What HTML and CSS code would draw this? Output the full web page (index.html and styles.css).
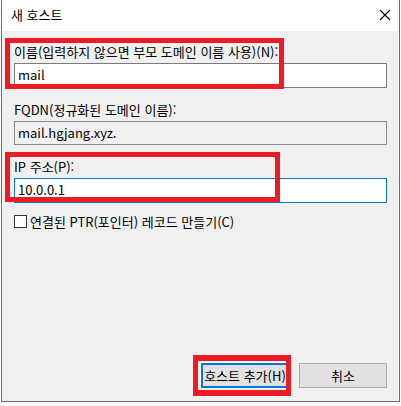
FILE: index.html
```html
<!DOCTYPE html>
<html lang="ko">
<head>
<meta charset="utf-8">
<title>새 호스트</title>
<link rel="stylesheet" href="styles.css">
</head>
<body>
<div class="dialog">
  <div class="titlebar">
    <span class="title">새 호스트</span>
    <svg class="close" width="12" height="12" viewBox="0 0 12 12"><path d="M1 1 L11 11 M11 1 L1 11" stroke="#000" stroke-width="1.1" fill="none"/></svg>
  </div>
  <div class="content">
    <label class="label">이름(입력하지 않으면 부모 도메인 이름 사용)(N):</label>
    <div class="input">mail</div>
    <label class="label gap">FQDN(정규화된 도메인 이름):</label>
    <div class="input readonly">mail.hgjang.xyz.</div>
    <label class="label gap">IP 주소(P):</label>
    <div class="input focused">10.0.0.1</div>
    <div class="check-row">
      <span class="checkbox"></span>
      <span class="check-label">연결된 PTR(포인터) 레코드 만들기(C)</span>
    </div>
    <div class="buttons">
      <button class="btn primary">호스트 추가(H)</button>
      <button class="btn">취소</button>
    </div>
  </div>
  <div class="mark mark-name"></div>
  <div class="mark mark-ip"></div>
  <div class="mark mark-btn"></div>
</div>
</body>
</html>
```
FILE: styles.css
```css
html, body {
  margin: 0;
  padding: 0;
  background: #ffffff;
}
body {
  width: 401px;
  height: 406px;
  overflow: hidden;
  font-family: "Noto Sans CJK KR", "Noto Sans", sans-serif;
  font-size: 13px;
  color: #000;
}
.dialog {
  position: relative;
  margin-left: 1px;
  width: 399px;
  height: 402px;
  box-sizing: border-box;
  border: 1px solid #6e6e6e;
  border-top: none;
  display: flex;
  flex-direction: column;
  background: #f0f0f0;
}
.titlebar {
  height: 31px;
  background: #ffffff;
  display: flex;
  align-items: center;
  justify-content: space-between;
  padding: 0 8px 0 9px;
  flex: none;
}
.title {
  line-height: 16px;
  margin-top: -1px;
}
.close {
  margin-top: -1px;
}
.content {
  flex: 1;
  display: flex;
  flex-direction: column;
  padding: 12px 12px 13px 12px;
}
.label {
  display: block;
  line-height: 17px;
  margin-bottom: 3px;
  white-space: nowrap;
}
.label.gap {
  margin-top: 13px;
}
.input {
  height: 25px;
  box-sizing: border-box;
  border: 1px solid #7a7a7a;
  background: #ffffff;
  padding: 0 3px;
  line-height: 22px;
}
.input.readonly {
  background: #f0f0f0;
  border-color: #8a8a8a;
  height: 24px;
}
.input.focused {
  border-color: #0078d7;
}
.check-row {
  display: flex;
  align-items: center;
  margin-top: 12px;
  height: 13px;
}
.checkbox {
  width: 13px;
  height: 13px;
  box-sizing: border-box;
  border: 1px solid #333333;
  background: #ffffff;
  margin-right: 3px;
}
.check-label {
  line-height: 15px;
}
.buttons {
  margin-top: auto;
  display: flex;
  justify-content: flex-end;
  gap: 10px;
}
.btn {
  width: 88px;
  height: 25px;
  box-sizing: border-box;
  border: 1px solid #adadad;
  background: #e1e1e1;
  font-family: inherit;
  font-size: 13px;
  color: #000;
  padding: 0;
  line-height: 20px;
}
.btn.primary {
  border: 2px solid #0078d7;
  box-shadow: 0 0 0 1px #ffffff;
}
.mark {
  position: absolute;
  box-sizing: border-box;
  border: 5px solid #ed1c24;
  pointer-events: none;
}
.mark-name {
  left: 3px;
  top: 38px;
  width: 279px;
  height: 51px;
}
.mark-ip {
  left: 3px;
  top: 152px;
  width: 275px;
  height: 50px;
}
.mark-btn {
  left: 191px;
  top: 355px;
  width: 98px;
  height: 41px;
  border-width: 6px 5px;
}
```
